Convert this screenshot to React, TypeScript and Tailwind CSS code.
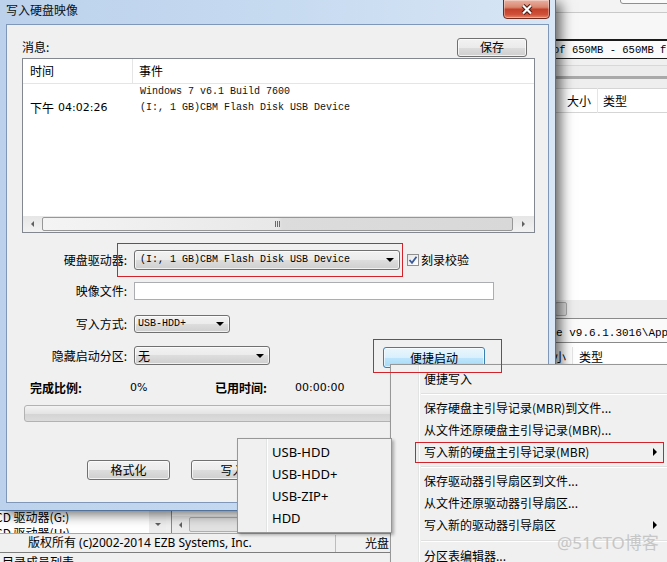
import React from 'react'

const cjk = "font-['Noto_Sans_CJK_SC',sans-serif]"
const mono = "font-['Liberation_Mono',monospace]"
const latin = "font-['Noto_Sans','Noto_Sans_CJK_SC',sans-serif]"
const tahoma = "font-['DejaVu_Sans','Liberation_Sans',sans-serif]"

const btn =
  'flex items-center justify-center rounded-[3px] border border-[#707070] bg-[linear-gradient(#f2f2f2,#ebebeb_50%,#dddddd_50%,#cfcfcf)] shadow-[inset_0_0_0_1px_rgba(255,255,255,0.7)]'

function DownArrow() {
  return <span className="block h-0 w-0 border-x-[4px] border-t-[4px] border-x-transparent border-t-black" />
}

function Combo({ className, children }: { className: string; children: React.ReactNode }) {
  return (
    <div className={`flex items-center justify-between overflow-hidden whitespace-nowrap pr-[5px] ${btn} !justify-between ${className}`}>
      {children}
      <DownArrow />
    </div>
  )
}

function HScroll() {
  return (
    <div className="flex h-[16px] shrink-0 bg-[linear-gradient(#e6e6e6,#f2f2f2)]">
      <div className="flex w-[19px] items-center justify-center">
        <span className="block h-0 w-0 border-y-[3px] border-r-[3px] border-y-transparent border-r-[#606060]" />
      </div>
      <div className="my-[1px] flex flex-1 items-center justify-center rounded-[2px] border border-[#979797] bg-[linear-gradient(90deg,#f4f4f4,#e8e8e8_50%,#dcdcdc_51%,#d8d8d8)]">
        <div className="flex gap-[1px]">
          <span className="block h-[6px] w-[1px] bg-[#6a6a6a]" />
          <span className="block h-[6px] w-[1px] bg-[#6a6a6a]" />
          <span className="block h-[6px] w-[1px] bg-[#6a6a6a]" />
        </div>
      </div>
      <div className="flex w-[21px] items-center justify-center">
        <span className="block h-0 w-0 border-y-[3px] border-l-[3px] border-y-transparent border-l-[#606060]" />
      </div>
    </div>
  )
}

function MainWindow() {
  return (
    <div className="absolute inset-0 flex flex-col bg-white">
      <div className="flex h-[503px] shrink-0">
        <div className="w-[548px] bg-white" />
        <div className="flex flex-1 flex-col overflow-hidden bg-white">
          <div className="relative h-[13px] shrink-0 border-b border-[#c9c9c9] bg-[#f3f3f3]">
            <div className="absolute left-[72px] top-[-5px] h-[9px] w-[60px] rounded-[3px] border border-[#8e8f8f] bg-[#fafafa]" />
          </div>
          <div className="h-[26px] shrink-0 bg-[#f7f7f7]" />
          <div className={`flex h-[20px] shrink-0 items-center whitespace-nowrap border-t-2 border-b border-[#1c1c1c] bg-[#fbfbfb] pl-[5px] text-[10.5px] ${mono}`}>
            of 650MB - 650MB free
          </div>
          <div className="flex h-[29px] shrink-0 flex-col bg-[#f0f0f0]">
            <div className="h-[6px]" />
            <div className="h-[1px] bg-[#d8d8d8]" />
            <div className="h-[10px] bg-[#ececec]" />
            <div className="h-[3px] bg-[#a9a9a9]" />
            <div className="flex-1 bg-[#eeeeee]" />
          </div>
          <div className="flex h-[25px] shrink-0 items-center border-y border-[#d5d5d5] bg-white">
            <span className="ml-[19px] w-[30px]">大小</span>
            <span className="h-[25px] w-[1px] bg-[#e5e5e5]" />
            <span className="ml-[5px]">类型</span>
          </div>
          <div className="h-[187px] shrink-0 bg-white" />
          <div className="flex h-[18px] shrink-0 items-center bg-[#ededed]">
            <div className="ml-[7px] h-[14px] w-[12px] rounded-[2px] border border-[#aaaaaa] bg-[#dcdcdc]" />
          </div>
          <div className={`flex h-[25px] shrink-0 items-center whitespace-nowrap border-y border-[#8a8a8a] bg-[#fafafa] pl-[8px] pt-[4px] text-[11px] ${mono}`}>
            e v9.6.1.3016\App\Lang
          </div>
          <div className="flex h-[27px] shrink-0 items-center bg-white">
            <span className="ml-[6px] w-[18px]">小</span>
            <span className="h-[20px] w-[1px] bg-[#e5e5e5]" />
            <span className="ml-[6px]">类型</span>
          </div>
          <div className="flex-1 bg-white" />
        </div>
      </div>
      <div className="flex h-[30px] shrink-0 bg-[#f0f0f0]">
        <div className="relative flex w-[166px] overflow-hidden bg-white">
          <div className="h-[30px] flex-1 overflow-hidden pt-[6px] leading-[16px]">
            <div className="-ml-[5px] whitespace-nowrap">CD 驱动器(G:)</div>
            <div className="-ml-[5px] h-[8px] overflow-hidden whitespace-nowrap">CD 驱动器(H:)</div>
          </div>
          <div className="flex w-[17px] flex-col items-center justify-end bg-[#eeeeee] pb-[7px]">
            <span className="block h-0 w-0 border-x-[3px] border-t-[3px] border-x-transparent border-t-[#606060]" />
          </div>
        </div>
        <div className="w-[6px] border-r border-[#8a8a8a] bg-[#f0f0f0]" />
        <div className="flex flex-1 flex-col justify-end bg-white">
          <div className="flex h-[17px] bg-[#ececec]">
            <div className="flex w-[17px] items-center justify-center">
              <span className="block h-0 w-0 border-y-[3px] border-r-[3px] border-y-transparent border-r-[#606060]" />
            </div>
            <div className="my-[1px] w-[150px] rounded-[2px] border border-[#b0b0b0] bg-[#e2e2e2]" />
          </div>
        </div>
      </div>
      <div className="flex h-[19px] shrink-0 items-center border-t border-[#a8a8a8] bg-[#f0f0f0]">
        <span className={`ml-[28px] w-[307px] ${latin} text-[12px]`}>版权所有 (c)2002-2014 EZB Systems, Inc.</span>
        <span className="h-[17px] w-[1px] bg-[#bdbdbd]" />
        <span className="ml-[29px]">光盘</span>
      </div>
      <div className="flex-1 overflow-hidden border-t border-[#7d7d7d] bg-[#f0f0f0] pl-[2px] leading-[18px]">目录成员列表</div>
    </div>
  )
}

function Dialog() {
  return (
    <div className="absolute left-0 top-0 flex h-[511px] w-[556px] flex-col border-b border-r border-[#52729a] bg-[linear-gradient(90deg,#bcd2ec,#c6daf0_50%,#d8e6f5)] shadow-[5px_3px_12px_rgba(0,0,0,0.6)]">
      <div className="relative h-[24px] shrink-0">
        <div className="pl-[6px] pt-[2px] text-[12px] leading-[16px] text-[#111]">写入硬盘映像</div>
        <div className="absolute right-[5px] top-[-1px] flex h-[20px] w-[47px] items-center justify-center rounded-b-[4px] border border-[#6d2a1f] bg-[linear-gradient(#eab0a0,#d98770_40%,#c4402a_52%,#cf5038_80%,#e6876a)] shadow-[inset_0_0_0_1px_rgba(255,255,255,0.35)]">
          <svg width="14" height="11" viewBox="0 0 14 11">
            <path d="M3 1.5 L11 9.5 M11 1.5 L3 9.5" stroke="#4a1a12" strokeWidth="4.2" />
            <path d="M3 1.5 L11 9.5 M11 1.5 L3 9.5" stroke="#ffffff" strokeWidth="2.2" />
          </svg>
        </div>
      </div>
      <div className="mx-[6px] flex flex-1 flex-col border border-[#7f98b9] bg-[#f0f0f0] pl-[15px] pr-[13px] pt-[13px]">
        <div className="flex h-[18px] items-center justify-between">
          <span>消息:</span>
          <div className={`mr-[8px] h-[19px] w-[70px] ${btn}`}>保存</div>
        </div>
        <div className="mt-[2px] flex h-[175px] flex-col border border-[#828790] bg-white">
          <div className="flex h-[25px] shrink-0 border-b border-[#e5e5e5]">
            <div className="flex w-[110px] items-center border-r border-[#e5e5e5] pl-[7px]">时间</div>
            <div className="flex items-center pl-[6px]">事件</div>
          </div>
          <div className="flex h-[16px] shrink-0 items-center whitespace-nowrap">
            <div className="w-[110px]" />
            <div className={`pl-[7px] text-[10px] text-[#111] ${mono}`}>Windows 7 v6.1 Build 7600</div>
          </div>
          <div className="flex h-[16px] shrink-0 items-center whitespace-nowrap">
            <div className="flex w-[110px] items-center pl-[7px]">
              下午 <span className={`ml-[4px] text-[11px] ${tahoma}`}>04:02:26</span>
            </div>
            <div className={`pl-[7px] text-[10px] text-[#111] ${mono}`}>(I:, 1 GB)CBM Flash Disk USB Device</div>
          </div>
          <div className="flex-1" />
          <HScroll />
        </div>

        <div className="mt-[17px] flex h-[20px] items-center">
          <span className="w-[105px] text-right">硬盘驱动器:</span>
          <Combo className={`ml-[7px] h-[20px] w-[266px] pl-[5px] text-[10px] ${mono}`}>(I:, 1 GB)CBM Flash Disk USB Device</Combo>
          <div className="ml-[7px] flex h-[12px] w-[12px] items-center justify-center border border-[#8f8f8f] bg-[linear-gradient(135deg,#e6e6e6,#ffffff)]">
            <svg width="10" height="10" viewBox="0 0 10 10">
              <path d="M1.5 5 L4 7.8 L8.5 1.8" fill="none" stroke="#3a5a9a" strokeWidth="1.8" />
            </svg>
          </div>
          <span className="ml-[2px]">刻录校验</span>
        </div>
        <div className="mt-[12px] flex h-[18px] items-center">
          <span className="w-[105px] text-right">映像文件:</span>
          <div className="ml-[7px] h-[18px] w-[360px] border border-[#abadb3] bg-white" />
        </div>
        <div className="mt-[15px] flex h-[18px] items-center">
          <span className="w-[105px] text-right">写入方式:</span>
          <Combo className={`ml-[7px] h-[18px] w-[96px] pl-[3px] text-[10px] ${mono}`}>USB-HDD+</Combo>
        </div>
        <div className="mt-[13px] flex h-[22px] items-start">
          <div className="flex h-[19px] items-center">
            <span className="w-[105px] text-right">隐藏启动分区:</span>
            <Combo className="ml-[7px] h-[19px] w-[136px] pl-[3px]">无</Combo>
          </div>
          <div className="ml-[113px] mt-[1px] flex h-[21px] w-[102px] items-center justify-center rounded-[3px] border border-[#3c7fb1] bg-[linear-gradient(#eaf6fd,#d9f0fc_50%,#bee6fd_50%,#a7d9f5)] shadow-[inset_0_0_0_1px_rgba(255,255,255,0.6)]">
            便捷启动
          </div>
        </div>
        <div className="mt-[12px] flex h-[16px] items-center pl-[8px]">
          <span className="w-[100px] font-bold">完成比例:</span>
          <span className={`w-[85px] text-[11px] ${tahoma}`}>0%</span>
          <span className="w-[80px] font-bold">已用时间:</span>
          <span className={`text-[11px] ${tahoma}`}>00:00:00</span>
        </div>
        <div className="ml-[2px] mt-[9px] h-[17px] w-[510px] rounded-[3px] border border-[#b2b2b2] bg-[linear-gradient(#f3f3f3,#e4e4e4_50%,#d4d4d4_55%,#dcdcdc)]" />
        <div className="mt-[38px] flex gap-[21px] pl-[65px]">
          <div className={`h-[20px] w-[83px] ${btn}`}>格式化</div>
          <div className={`h-[20px] w-[83px] ${btn}`}>写入</div>
        </div>
      </div>
      <div className="h-[7px] shrink-0" />
    </div>
  )
}

function MenuItem({ label, sub, pl }: { label: string; sub?: boolean; pl: string }) {
  return (
    <div className={`relative flex h-[22px] items-center whitespace-nowrap ${pl}`}>
      {label}
      {sub && <span className="absolute left-[262px] top-[7px] block h-0 w-0 border-y-[4px] border-l-[4px] border-y-transparent border-l-black" />}
    </div>
  )
}

function Sep({ h }: { h: string }) {
  return (
    <div className={`flex items-center pl-[30px] ${h}`}>
      <div className="h-[2px] w-full border-t border-b border-t-[#e0e0e0] border-b-white" />
    </div>
  )
}

function ContextMenu() {
  return (
    <div className="absolute left-[390px] top-[364px] h-[210px] w-[282px] border border-[#979797] bg-[#f0f0f0] pt-[3px] shadow-[2px_2px_3px_rgba(0,0,0,0.3)]">
      <div className="absolute bottom-0 left-[27px] top-0 w-[2px] border-l border-r border-l-[#e2e3e3] border-r-white" />
      <MenuItem pl="pl-[33px]" label="便捷写入" />
      <Sep h="h-[7px]" />
      <MenuItem pl="pl-[33px]" label="保存硬盘主引导记录(MBR)到文件..." />
      <MenuItem pl="pl-[33px]" label="从文件还原硬盘主引导记录(MBR)..." />
      <MenuItem pl="pl-[33px]" label="写入新的硬盘主引导记录(MBR)" sub />
      <Sep h="h-[7px]" />
      <MenuItem pl="pl-[33px]" label="保存驱动器引导扇区到文件..." />
      <MenuItem pl="pl-[33px]" label="从文件还原驱动器引导扇区..." />
      <MenuItem pl="pl-[33px]" label="写入新的驱动器引导扇区" sub />
      <Sep h="h-[9px]" />
      <MenuItem pl="pl-[33px]" label="分区表编辑器..." />
    </div>
  )
}

function SubMenu() {
  return (
    <div className={`absolute left-[237px] top-[438px] h-[95px] w-[155px] border border-[#979797] bg-[#f0f0f0] pt-[2px] text-[13px] shadow-[2px_2px_3px_rgba(0,0,0,0.3)] ${latin}`}>
      <div className="absolute bottom-0 left-[28px] top-0 w-[2px] border-l border-r border-l-[#e2e3e3] border-r-white" />
      <MenuItem pl="pl-[34px]" label="USB-HDD" />
      <MenuItem pl="pl-[34px]" label="USB-HDD+" />
      <MenuItem pl="pl-[34px]" label="USB-ZIP+" />
      <MenuItem pl="pl-[34px]" label="HDD" />
    </div>
  )
}

export default function App() {
  return (
    <div className={`relative h-[562px] w-[667px] overflow-hidden bg-[#f0f0f0] text-[12px] leading-[16px] text-black ${cjk}`}>
      <MainWindow />
      <Dialog />
      <ContextMenu />
      <SubMenu />
      <div className="absolute left-[117px] top-[243px] h-[34px] w-[286px] border border-[#d2232b]" />
      <div className="absolute left-[373px] top-[339px] h-[34px] w-[129px] border border-[#d2232b]" />
      <div className="absolute left-[415px] top-[442px] h-[21px] w-[249px] border border-[#d2232b]" />
      <div className={`pointer-events-none absolute left-[557px] top-[533px] text-[17px] leading-[20px] text-[#c6c6c6] ${latin}`}>@51CTO博客</div>
    </div>
  )
}
